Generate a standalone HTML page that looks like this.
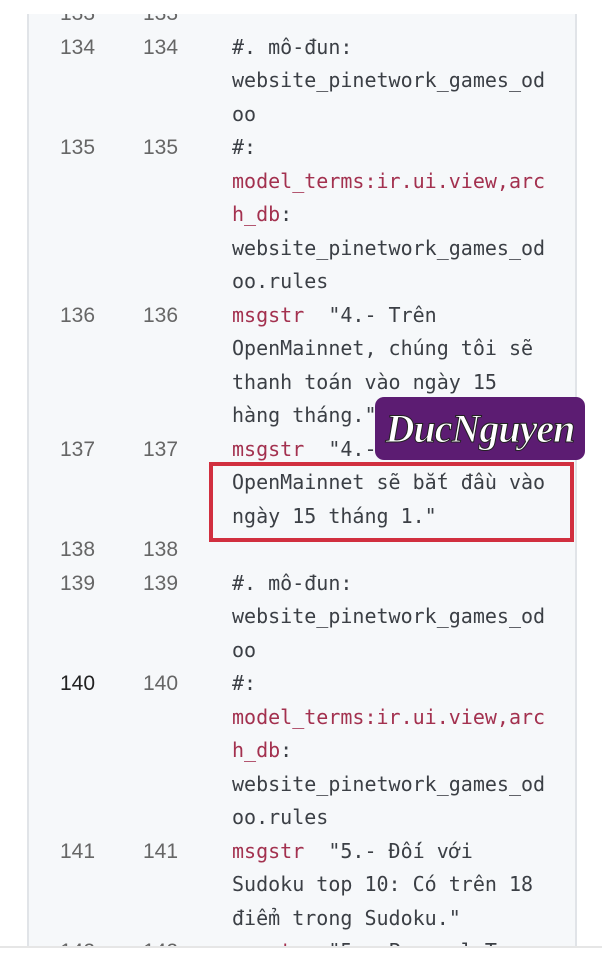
<!DOCTYPE html>
<html><head><meta charset="utf-8"><style>
html,body{margin:0;padding:0;background:#fff;width:602px;height:960px;overflow:hidden;position:relative;font-family:"DejaVu Sans Mono","Liberation Mono",monospace;}
.panel{position:absolute;left:27px;top:0;width:546px;height:946px;background:#f6f8fa;border-left:2px solid #e1e4e8;border-right:2px solid #e1e4e8;}
.bot{position:absolute;left:0;top:946px;width:602px;height:2px;background:#e6e6e6;}
.rows{position:absolute;left:0;top:-3px;width:602px;}
.r{height:33.5px;line-height:33.5px;position:relative;white-space:pre;}
.n{position:absolute;top:0;font-family:"Liberation Sans","DejaVu Sans",sans-serif;font-size:21px;color:#666;}
.n1{left:60px}.n2{left:143px}
.c{position:absolute;left:232px;top:0;font-size:20px;color:#3b3f45;}
.k{color:#a3314f}
.d{color:#222}
.box{position:absolute;left:209px;top:462px;width:357px;height:72px;border:4px solid #d12f3f;}
.wm{position:absolute;left:375px;top:397px;width:210px;height:63px;background:#5c1c72;border-radius:9px;color:#fff;font-family:"Liberation Serif",serif;font-style:italic;font-weight:bold;font-size:40px;line-height:63px;text-align:center;-webkit-text-stroke:1px #222;letter-spacing:-1px;}
.topw{position:absolute;left:0;top:0;width:602px;height:14px;background:#fff;}
</style></head><body>
<div class="panel"></div>
<div class="rows">
<div class="r"><span class="n n1">133</span><span class="n n2">133</span></div>
<div class="r"><span class="n n1">134</span><span class="n n2">134</span><span class="c">#. mô-đun:</span></div>
<div class="r"><span class="c">website_pinetwork_games_od</span></div>
<div class="r"><span class="c">oo</span></div>
<div class="r"><span class="n n1">135</span><span class="n n2">135</span><span class="c">#:</span></div>
<div class="r"><span class="c k">model_terms:ir.ui.view,arc</span></div>
<div class="r"><span class="c"><span class="k">h_db</span>:</span></div>
<div class="r"><span class="c">website_pinetwork_games_od</span></div>
<div class="r"><span class="c">oo.rules</span></div>
<div class="r"><span class="n n1">136</span><span class="n n2">136</span><span class="c"><span class="k">msgstr</span>  "4.- Trên</span></div>
<div class="r"><span class="c">OpenMainnet, chúng tôi sẽ</span></div>
<div class="r"><span class="c">thanh toán vào ngày 15</span></div>
<div class="r"><span class="c">hàng tháng."</span></div>
<div class="r"><span class="n n1">137</span><span class="n n2">137</span><span class="c"><span class="k">msgstr</span>  "4.-</span></div>
<div class="r"><span class="c">OpenMainnet sẽ bắt đầu vào</span></div>
<div class="r"><span class="c">ngày 15 tháng 1."</span></div>
<div class="r"><span class="n n1">138</span><span class="n n2">138</span></div>
<div class="r"><span class="n n1">139</span><span class="n n2">139</span><span class="c">#. mô-đun:</span></div>
<div class="r"><span class="c">website_pinetwork_games_od</span></div>
<div class="r"><span class="c">oo</span></div>
<div class="r"><span class="n n1 d">140</span><span class="n n2">140</span><span class="c">#:</span></div>
<div class="r"><span class="c k">model_terms:ir.ui.view,arc</span></div>
<div class="r"><span class="c"><span class="k">h_db</span>:</span></div>
<div class="r"><span class="c">website_pinetwork_games_od</span></div>
<div class="r"><span class="c">oo.rules</span></div>
<div class="r"><span class="n n1">141</span><span class="n n2">141</span><span class="c"><span class="k">msgstr</span>  "5.- Đối với</span></div>
<div class="r"><span class="c">Sudoku top 10: Có trên 18</span></div>
<div class="r"><span class="c">điểm trong Sudoku."</span></div>
<div class="r"><span class="n n1">142</span><span class="n n2">142</span><span class="c"><span class="k">msgstr</span>  "5.- Para el Top</span></div>
</div>
<div class="topw"></div>
<div class="bot"></div>
<div style="position:absolute;left:0;top:948px;width:602px;height:12px;background:#fff"></div>
<div class="box"></div>
<div class="wm">DucNguyen</div>
</body></html>
